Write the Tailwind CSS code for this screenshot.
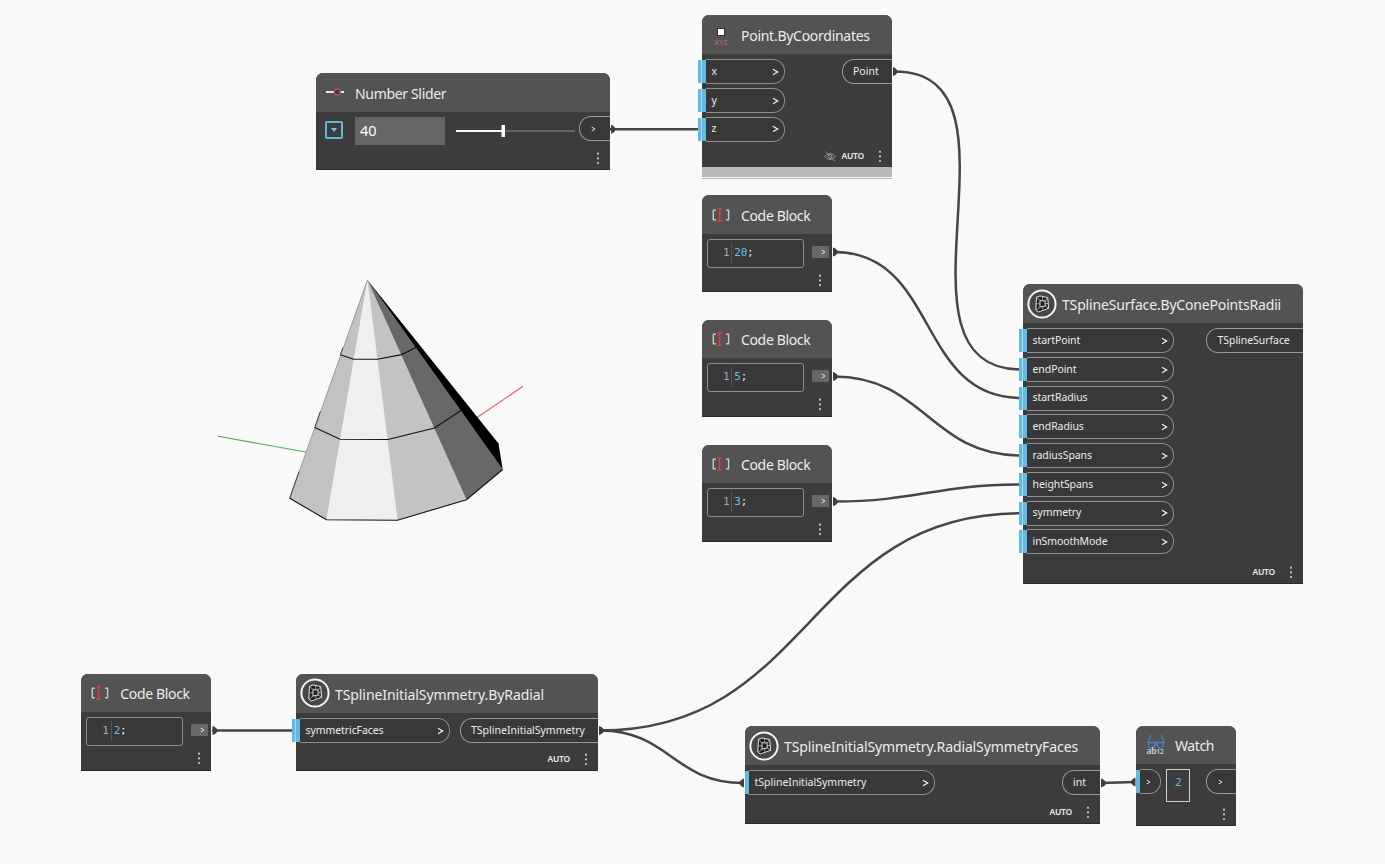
<!DOCTYPE html>
<html lang="en">
<head>
<meta charset="utf-8">
<title>Node graph</title>
<script src="https://cdn.jsdelivr.net/npm/@tailwindcss/browser@4"></script>
</head>
<body class="relative h-[864px] w-[1385px] overflow-hidden bg-[#f9f9f9] font-['Noto_Sans',sans-serif] text-[10.5px] text-[#ececec]">

<!-- Shared symbols -->
<svg class="hidden">
  <symbol id="tspline" viewBox="0 0 30 30">
    <circle cx="15" cy="15" r="13.600" fill="#474747" stroke="#f4f4f4" stroke-width="2"/>
    <path d="M9.500 8.200 13 6.900 20.700 8.600 21.700 19.300 11.200 23 8.800 21Z" fill="#303030" stroke="#dedede" stroke-width="1" stroke-linejoin="round"/>
    <path d="M11.700 9.200 19 9.700M10.700 10.800V19.500M11.800 21.400l7.600-2.700" stroke="#0c0c0c" stroke-width="1.100"/>
    <path d="M13 11.700 18 12 18.200 17 13 17.900Z" fill="#222" stroke="#e4e4e4" stroke-width=".9"/>
    <path d="M9.900 8.500l3.100 3.200M20.500 8.800l-2.500 3.200M21.400 19.200l-3.200-2.200M9.400 21.100l3.600-3.200M15.600 7.600v4.200M15.800 17.400v3.800M9.400 14.800h3.600M18 14.500h3" stroke="#c8c8c8" stroke-width=".7" fill="none"/>
  </symbol>
  <symbol id="codeblock" viewBox="0 0 18 14">
    <path d="M3.900 2.200H1.300v9.600h2.600M14 2.200H16.600v9.600H14" fill="none" stroke="#c8c8c8" stroke-width="1.400"/>
    <path d="M5.500 .8h4.200M5.500 13.200h4.200M7.600 .8v12.400" stroke="#dd3f3b" stroke-width="1.500"/>
  </symbol>
  <symbol id="dots" viewBox="0 0 4 13"><g fill="#c9c9c9"><circle cx="2" cy="1.700" r="1.100"/><circle cx="2" cy="6.400" r="1.100"/><circle cx="2" cy="11.100" r="1.100"/></g></symbol>
  <symbol id="gt" viewBox="0 0 7 8"><path d="M1 1.300 5.600 4 1 6.700" fill="none" stroke="#f0f0f0" stroke-width="1.300"/></symbol>
</svg>

<!-- Wires and 3D preview -->
<svg class="absolute inset-0" width="1385" height="864">
  <g fill="none" stroke="#474546" stroke-width="2.500">
    <path d="M610 129.300H700"/>
    <path d="M893 71.500H895C1038 71.500 877 369.500 1021 369.500"/>
    <path d="M834 252C939 252 916 398 1021 398"/>
    <path d="M834 376.500C924 376.500 931 455.500 1021 455.500"/>
    <path d="M834 501.500C917 501.500 936 484.500 1021 484.500"/>
    <path d="M212 730.500H294"/>
    <path d="M600 730.500C812 730.500 807 513.300 1021 513.300"/>
    <path d="M600 730.500C669 730.500 674 783 743 783"/>
    <path d="M1101 783 1135 782"/>
  </g>
  <g fill="#3f3d3e">
    <path d="M611 124.800q4 1.500 4.500 4.500q-.5 3-4.500 4.500Z"/>
    <path d="M893 67q4 1.500 4.500 4.500q-.5 3-4.500 4.500Z"/>
    <path d="M833 247.500q4.500 1.500 5 4.500q-.5 3-5 4.500Z"/>
    <path d="M833 372q4.500 1.500 5 4.500q-.5 3-5 4.500Z"/>
    <path d="M833 497q4.500 1.500 5 4.500q-.5 3-5 4.500Z"/>
    <path d="M212.500 726q4.500 1.500 5 4.500q-.5 3-5 4.500Z"/>
    <path d="M599 726q4.500 1.500 5 4.500q-.5 3-5 4.500Z"/>
    <path d="M1101 778.500q4.500 1.500 5 4.500q-.5 3-5 4.500Z"/>
    <path d="M744 778.500q-4 1.500-4.500 4.500q.5 3 4.500 4.500Z"/>
    <path d="M1135.500 777.500q-4 1.500-4.500 4.500q.5 3 4.500 4.500Z"/>
  </g>
  <path d="M218 436.300 306 452" stroke="#4fae55" stroke-width="1.100"/>
  <path d="M477 417.500 523 386.300" stroke="#f45b5b" stroke-width="1.100"/>
  <path d="M367.500 280 290 498.300 326.500 519.700Z" fill="#c2c2c2"/>
  <path d="M367.500 280 326.500 519.700 397.500 520Z" fill="#efefef"/>
  <path d="M367.500 280 397.500 520 466.500 499.700Z" fill="#c3c3c3"/>
  <path d="M367.500 280 466.500 499.700 502.700 469.500Z" fill="#686868"/>
  <path d="M367.500 280 502.700 469.500 498.500 443.500Z" fill="#000"/>
  <path d="M367.500 280 289.700 498.300" stroke="#777" stroke-width=".7"/>
  <g fill="none" stroke="#111" stroke-width="1.100">
    <path d="M342.800 347.500 340.300 354.700" stroke-width=".7"/>
    <path d="M320.300 411.500 314.800 427.500" stroke-width=".7"/>
    <path d="M299 471.500 289.700 498.300" stroke-width=".7"/>
    <path d="M340.300 354.700 353.500 359.300 377.500 359.300 401.500 354.600 416 347.500"/>
    <path d="M314.800 427.500 340 439.300 388 439.500 434.500 428 461 410.500"/>
    <path d="M289.700 498.300 326.500 519.700 397.500 520.300 466.500 499.700 502.700 469.500"/>
  </g>
</svg>

<!-- Number Slider -->
<section class="absolute left-[315.500px] top-[72.500px] flex h-[97.500px] w-[294px] flex-col rounded-t-[7px] border-b border-[#292929] bg-[#3c3c3c]">
  <header class="flex h-[39px] shrink-0 items-center rounded-t-[7px] bg-[#535353] pl-[10.500px]">
    <svg class="h-[10px] w-[18px]" viewBox="0 0 18 10"><path d="M0 5H18" stroke="#f4f4f4" stroke-width="1.800"/><circle cx="11.300" cy="5" r="3" fill="#3c3c3c" stroke="#b8504e" stroke-width="1.300"/></svg>
    <h2 class="ml-[11px] mt-[3px] text-[14px] leading-none tracking-[-0.330px]">Number Slider</h2>
  </header>
  <div class="flex h-[38px] items-center">
    <div class="mb-[1px] ml-[9px] flex size-[18px] items-center justify-center rounded-[2px] border-2 border-[#5fb8e3]"><svg class="h-[4px] w-[6px]" viewBox="0 0 6 4"><path d="M0 0H6L3 4Z" fill="#6cc4ee"/></svg></div>
    <div class="ml-[12px] flex h-[28px] w-[90px] items-center bg-[#666] pl-[5.500px] text-[14.500px] text-white">40</div>
    <svg class="ml-[11px] h-[14px] w-[119px]" viewBox="0 0 119 14"><path d="M46 7H119" stroke="#6f6f6f" stroke-width="1.500"/><path d="M0 7H46" stroke="#fff" stroke-width="2"/><rect x="45.500" y="1" width="3.500" height="12" fill="#fff"/></svg>
    <div class="mb-[4px] ml-auto flex h-[25px] w-[30.500px] items-center rounded-l-[12px] border border-r-0 border-[#9a9a9a] bg-[#383838] pl-[11px]"><svg class="h-[6px] w-[5px]"><use href="#gt"/></svg></div>
  </div>
  <svg class="ml-auto mr-[10px] mt-[2px] h-[13px] w-[4px]"><use href="#dots"/></svg>
</section>

<!-- Point.ByCoordinates -->
<section class="absolute left-[702px] top-[15px] flex h-[162px] w-[190px] flex-col rounded-t-[7px] bg-[#3c3c3c]">
  <header class="flex h-[39px] shrink-0 items-center rounded-t-[7px] bg-[#535353] pl-[11px]">
    <div class="mt-[5px] flex w-[16px] flex-col items-center text-[7.500px] font-medium leading-[9px] text-[#c96060]"><span class="mb-[2px] size-[8px] border border-[#333] bg-white"></span>XYZ</div>
    <h2 class="ml-[12px] mt-[2px] text-[14px] leading-none tracking-[-0.270px]">Point.ByCoordinates</h2>
  </header>
  <div class="flex justify-between pt-[5px]">
    <div class="-ml-[4px] flex w-[86.500px] flex-col gap-[3.750px]" data-ports="x,y,z"></div>
    <div class="flex h-[25px] w-[50px] items-center rounded-l-[12px] border border-r-0 border-[#9a9a9a] bg-[#383838] pl-[10px] pt-[1px]">Point</div>
  </div>
  <footer class="mt-[7px] flex h-[15px] items-center justify-end pr-[10px] text-[8.500px] font-semibold tracking-[-0.200px]">
    <svg class="mr-[5px] h-[11px] w-[12px]" viewBox="0 0 12 11" fill="none" stroke="#999" stroke-width=".9"><path d="M.5 5.500Q6-.5 11.500 5.500Q6 11.500 .5 5.500ZM1.500 .5l9.500 10"/><circle cx="6" cy="5.500" r="2"/></svg>
    AUTO<svg class="ml-[14px] h-[13px] w-[4px]"><use href="#dots"/></svg>
  </footer>
  <div class="mt-auto h-[10px] shrink-0 bg-[#bababa]"></div>
  <div class="absolute inset-x-0 -bottom-[2px] h-[1px] bg-[#b4b4b4]"></div>
</section>

<!-- Code Blocks -->
<section class="absolute left-[702px] top-[195.400px] flex h-[97px] w-[130px] flex-col rounded-t-[7px] border-b border-[#292929] bg-[#3c3c3c]" data-code="20"></section>
<section class="absolute left-[702px] top-[319.600px] flex h-[97px] w-[130px] flex-col rounded-t-[7px] border-b border-[#292929] bg-[#3c3c3c]" data-code="5"></section>
<section class="absolute left-[702px] top-[444.600px] flex h-[97px] w-[130px] flex-col rounded-t-[7px] border-b border-[#292929] bg-[#3c3c3c]" data-code="3"></section>
<section class="absolute left-[81.300px] top-[673.600px] flex h-[97px] w-[130px] flex-col rounded-t-[7px] border-b border-[#292929] bg-[#3c3c3c]" data-code="2"></section>

<!-- TSplineSurface.ByConePointsRadii -->
<section class="absolute left-[1023px] top-[284px] flex h-[300px] w-[280px] flex-col rounded-t-[7px] border-b border-[#292929] bg-[#3c3c3c]">
  <header class="flex h-[39px] shrink-0 items-center rounded-t-[7px] bg-[#535353] pl-[4px]"><svg class="size-[30px]"><use href="#tspline"/></svg><h2 class="ml-[5px] mt-[2px] text-[14px] leading-none tracking-[-0.170px]">TSplineSurface.ByConePointsRadii</h2></header>
  <div class="flex justify-between pt-[5px]">
    <div class="-ml-[4px] flex w-[154.500px] flex-col gap-[3.750px]" data-ports="startPoint,endPoint,startRadius,endRadius,radiusSpans,heightSpans,symmetry,inSmoothMode"></div>
    <div class="flex h-[25px] w-[97px] items-center rounded-l-[12px] border border-r-0 border-[#9a9a9a] bg-[#383838] pl-[10.500px] tracking-[-0.050px]">TSplineSurface</div>
  </div>
  <footer class="mt-[11px] flex h-[15px] items-center justify-end pr-[10px] text-[8.500px] font-semibold tracking-[-0.200px]">AUTO<svg class="ml-[14px] h-[13px] w-[4px]"><use href="#dots"/></svg></footer>
</section>

<!-- TSplineInitialSymmetry.ByRadial -->
<section class="absolute left-[296px] top-[674px] flex h-[97px] w-[302px] flex-col rounded-t-[7px] border-b border-[#292929] bg-[#3c3c3c]">
  <header class="flex h-[39px] shrink-0 items-center rounded-t-[7px] bg-[#535353] pl-[4px]"><svg class="mb-[1px] size-[30px]"><use href="#tspline"/></svg><h2 class="ml-[5px] mt-[2px] text-[14px] leading-none tracking-[-0.080px]">TSplineInitialSymmetry.ByRadial</h2></header>
  <div class="flex justify-between pt-[5px]">
    <div class="-ml-[4px] flex w-[157.500px] flex-col" data-ports="symmetricFaces"></div>
    <div class="flex h-[25px] w-[138px] items-center rounded-l-[12px] border border-r-0 border-[#9a9a9a] bg-[#383838] pl-[10px]">TSplineInitialSymmetry</div>
  </div>
  <footer class="mt-[9px] flex h-[15px] items-center justify-end pr-[10px] text-[8.500px] font-semibold tracking-[-0.200px]">AUTO<svg class="ml-[14px] h-[13px] w-[4px]"><use href="#dots"/></svg></footer>
</section>

<!-- TSplineInitialSymmetry.RadialSymmetryFaces -->
<section class="absolute left-[745px] top-[726px] flex h-[97.500px] w-[355px] flex-col rounded-t-[7px] border-b border-[#292929] bg-[#3c3c3c]">
  <header class="flex h-[39px] shrink-0 items-center rounded-t-[7px] bg-[#535353] pl-[4px]"><svg class="size-[30px]"><use href="#tspline"/></svg><h2 class="ml-[5px] mt-[2px] text-[14px] leading-none tracking-[-0.110px]">TSplineInitialSymmetry.RadialSymmetryFaces</h2></header>
  <div class="flex justify-between pt-[5px]">
    <div class="flex h-[25px] w-[189.500px] items-center"><i class="h-[23px] w-[4px] bg-[#62b9e4]"></i><span class="flex h-full grow items-center justify-between rounded-r-[12px] border border-l-0 border-[#8f8f8f] bg-[#383838] pl-[5.500px] pr-[4.500px]">tSplineInitialSymmetry<svg class="h-[8px] w-[7px]"><use href="#gt"/></svg></span></div>
    <div class="flex h-[25px] w-[38px] items-center rounded-l-[12px] border border-r-0 border-[#9a9a9a] bg-[#383838] pl-[10px]">int</div>
  </div>
  <footer class="mt-[9.500px] flex h-[15px] items-center justify-end pr-[10px] text-[8.500px] font-semibold tracking-[-0.200px]">AUTO<svg class="ml-[14px] h-[13px] w-[4px]"><use href="#dots"/></svg></footer>
</section>

<!-- Watch -->
<section class="absolute left-[1136px] top-[725.500px] flex h-[100.500px] w-[100px] flex-col rounded-t-[7px] border-b border-[#292929] bg-[#3c3c3c]">
  <header class="flex h-[38.500px] shrink-0 items-center rounded-t-[7px] bg-[#535353] pl-[10.500px]">
    <div class="relative h-[20px] w-[18px]">
      <svg class="h-[14px] w-[18px]" viewBox="0 0 18 14" fill="none" stroke="#4387c4" stroke-width="1.300"><path d="M4.500 .7Q2.500 1 1.200 7.500M13.500 .7Q15.500 1 16.800 7.500M1 7.500H17M1.200 7.500Q1.500 11.500 3.500 13.300M16.800 7.500Q16.500 11.500 14.500 13.300M9 8Q7.500 12 4.500 13.300M9 8Q10.500 12 13.500 13.300"/></svg>
      <span class="absolute -bottom-px left-0 text-[8.500px] font-semibold leading-[8px] tracking-[-0.200px] text-[#d0d0d0]">ab<span class="text-[6.500px]">12</span></span>
    </div>
    <h2 class="ml-[10.500px] mt-[2px] text-[14px] leading-none tracking-[-0.400px]">Watch</h2>
  </header>
  <div class="flex items-start pt-[5px]">
    <div class="flex h-[25px] w-[25px] items-center"><i class="h-[23px] w-[4px] bg-[#62b9e4]"></i><span class="flex h-full grow items-center rounded-r-[12px] border border-l-0 border-[#8f8f8f] bg-[#383838] pl-[6px]"><svg class="h-[6px] w-[5px]"><use href="#gt"/></svg></span></div>
    <div class="ml-[5px] flex h-[32.500px] w-[24px] items-start justify-center border border-[#d0d0d0] pl-[1px] pt-[4px] text-[11px] text-[#66c0ec]">2</div>
    <div class="ml-auto flex h-[25px] w-[30.500px] items-center rounded-l-[12px] border border-r-0 border-[#9a9a9a] bg-[#383838] pl-[11px]"><svg class="h-[6px] w-[5px]"><use href="#gt"/></svg></div>
  </div>
  <svg class="ml-auto mr-[10px] mt-[6px] h-[13px] w-[4px]"><use href="#dots"/></svg>
</section>

<script>
// Input ports with a two-part blue marker
document.querySelectorAll('[data-ports]').forEach(el => {
  el.innerHTML = el.dataset.ports.split(',').map(name => `
    <div class="flex h-[25px] items-center">
      <i class="flex h-[23px] w-[8px] gap-[1px] bg-[#a5dcf5]"><b class="w-[3px] bg-[#62b9e4]"></b><b class="grow bg-[#62b9e4]"></b></i>
      <span class="flex h-full grow items-center justify-between rounded-r-[12px] border border-l-0 border-[#8f8f8f] bg-[#383838] pl-[5.500px] pr-[4.500px] pt-[0.500px] tracking-[-0.080px]">${name}<svg class="h-[8px] w-[7px]"><use href="#gt"/></svg></span>
    </div>`).join('');
});
// Code Block contents
document.querySelectorAll('[data-code]').forEach(el => {
  el.innerHTML = `
    <header class="flex h-[38.500px] shrink-0 items-center rounded-t-[7px] bg-[#535353] pl-[10px]"><svg class="h-[14px] w-[18px]"><use href="#codeblock"/></svg><h2 class="ml-[11px] mt-[2.500px] text-[14px] leading-none tracking-[-0.350px]">Code Block</h2></header>
    <div class="flex items-start pl-[5px] pt-[5px]">
      <div class="flex h-[29px] w-[97px] items-center rounded-[3px] border border-[#8f8f8f] bg-[#383838] pb-[1px] pl-[15px] font-['DejaVu_Sans_Mono',monospace] text-[11px] tracking-[-0.300px]"><span class="mr-[2px] text-[#a8a8a8]">1</span><i class="mr-[2px] h-[20px] w-px bg-[#555]"></i><span class="text-[#66c0ec]">${el.dataset.code}</span>;</div>
      <div class="ml-[8px] mt-[7px] flex h-[12px] w-[17px] items-center justify-end bg-[#686868] pr-[3px]"><svg class="h-[6px] w-[5px]"><use href="#gt"/></svg></div>
    </div>
    <svg class="ml-auto mr-[10px] mt-[6px] h-[13px] w-[4px]"><use href="#dots"/></svg>`;
});
</script>
</body>
</html>
